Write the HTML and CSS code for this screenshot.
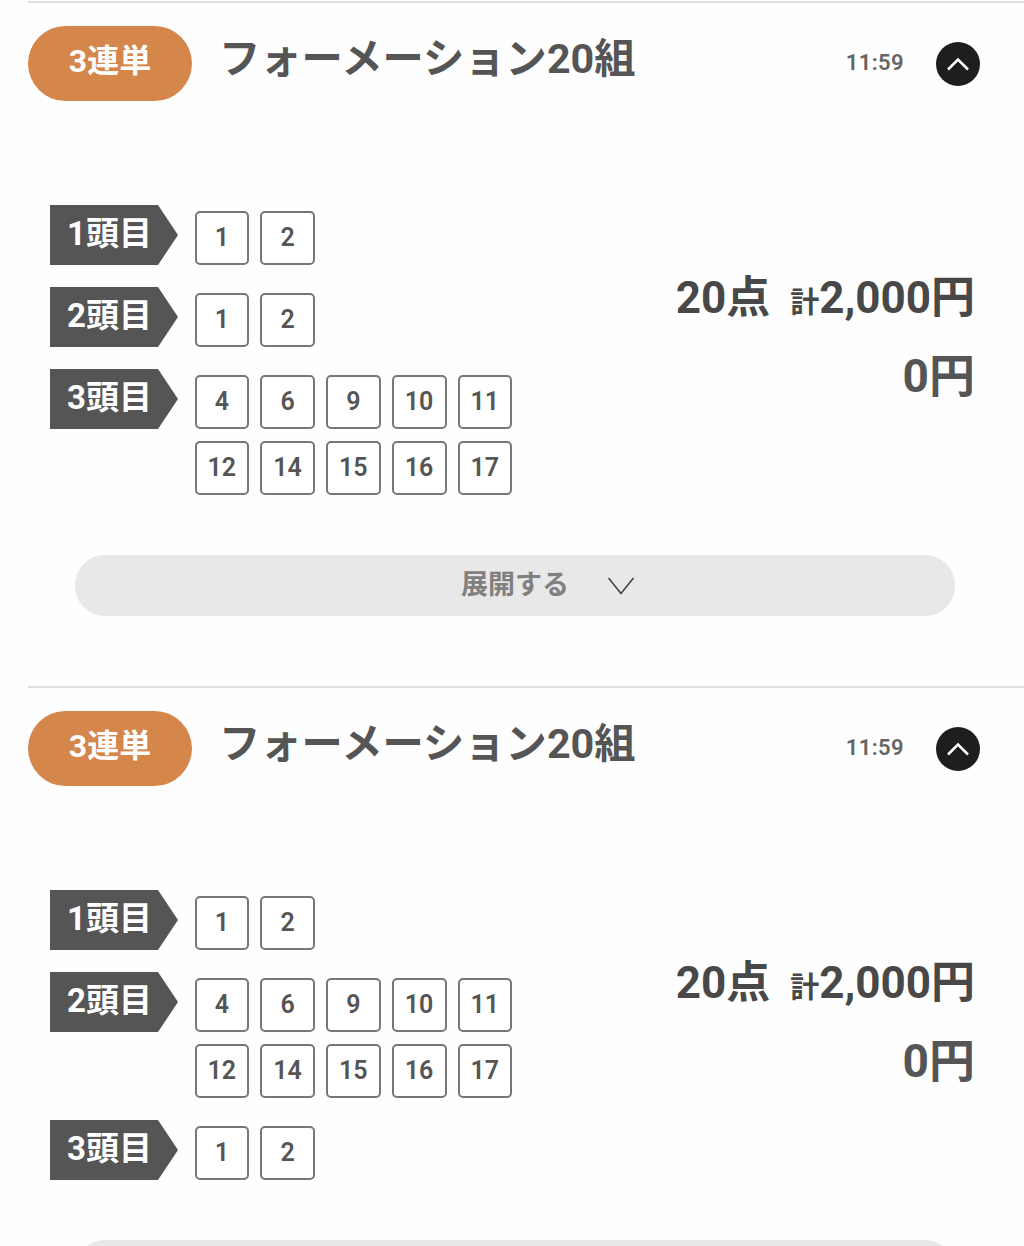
FILE: index.html
```html
<!DOCTYPE html>
<html lang="ja">
<head>
    <meta charset="UTF-8">
    <meta name="viewport" content="width=device-width, initial-scale=1.0">
    <title>購入履歴</title>
    <link rel="stylesheet" href="styles.css">
</head>
<body>
    <div class="bet-card">
        <div class="bet-header">
            <span class="bet-type">3連単</span>
            <h2 class="bet-title">フォーメーション20組</h2>
            <span class="bet-time">11:59</span>
            <span class="toggle-btn">
                <svg width="24" height="14" viewBox="0 0 24 14"><path d="M2 12.5 12 2.5 22 12.5"/></svg>
            </span>
        </div>

        <div class="bet-body">
            <div class="picks">
                <div class="pick-row">
                    <div class="pick-label">1頭目</div>
                    <div class="numbers">
                        <span class="num">1</span><span class="num">2</span>
                    </div>
                </div>
                <div class="pick-row">
                    <div class="pick-label">2頭目</div>
                    <div class="numbers">
                        <span class="num">1</span><span class="num">2</span>
                    </div>
                </div>
                <div class="pick-row">
                    <div class="pick-label">3頭目</div>
                    <div class="numbers">
                        <span class="num">4</span><span class="num">6</span><span class="num">9</span><span class="num">10</span><span class="num">11</span>
                        <span class="num">12</span><span class="num">14</span><span class="num">15</span><span class="num">16</span><span class="num">17</span>
                    </div>
                </div>
            </div>
            <div class="summary">
                <p class="summary-line"><span class="points">20点</span><small>計</small>2,000円</p>
                <p class="summary-line payout">0円</p>
            </div>
        </div>

        <div class="expand-btn">
            <span>展開する</span>
            <svg width="28" height="18" viewBox="0 0 28 18"><path d="M1.5 1 14 16.5 26.5 1"/></svg>
        </div>
    </div>

    <div class="bet-card">
        <div class="bet-header">
            <span class="bet-type">3連単</span>
            <h2 class="bet-title">フォーメーション20組</h2>
            <span class="bet-time">11:59</span>
            <span class="toggle-btn">
                <svg width="24" height="14" viewBox="0 0 24 14"><path d="M2 12.5 12 2.5 22 12.5"/></svg>
            </span>
        </div>

        <div class="bet-body">
            <div class="picks">
                <div class="pick-row">
                    <div class="pick-label">1頭目</div>
                    <div class="numbers">
                        <span class="num">1</span><span class="num">2</span>
                    </div>
                </div>
                <div class="pick-row">
                    <div class="pick-label">2頭目</div>
                    <div class="numbers">
                        <span class="num">4</span><span class="num">6</span><span class="num">9</span><span class="num">10</span><span class="num">11</span>
                        <span class="num">12</span><span class="num">14</span><span class="num">15</span><span class="num">16</span><span class="num">17</span>
                    </div>
                </div>
                <div class="pick-row">
                    <div class="pick-label">3頭目</div>
                    <div class="numbers">
                        <span class="num">1</span><span class="num">2</span>
                    </div>
                </div>
            </div>
            <div class="summary">
                <p class="summary-line"><span class="points">20点</span><small>計</small>2,000円</p>
                <p class="summary-line payout">0円</p>
            </div>
        </div>

        <div class="expand-btn">
            <span>展開する</span>
            <svg width="28" height="18" viewBox="0 0 28 18"><path d="M1.5 1 14 16.5 26.5 1"/></svg>
        </div>
    </div>
</body>
</html>
```

FILE: styles.css
```css
html {
    height: 1246px;
    overflow: hidden;
}

body {
    font-family: Roboto, "Noto Sans CJK JP", sans-serif;
    background-color: #fefefe;
    color: #555;
    margin: 0;
    padding: 1px 0 0;
}

.bet-card {
    margin-left: 28px;
    border-top: 2px solid #dedede;
    height: 683px;
}

/* header */
.bet-header {
    display: flex;
    align-items: flex-start;
    padding: 23px 44px 0 0;
}

.bet-type {
    width: 164px;
    height: 75px;
    border-radius: 38px;
    background-color: #d5864b;
    color: #fff;
    font-size: 32px;
    font-weight: 700;
    line-height: 71px;
    text-align: center;
}

.bet-title {
    margin: 1px 0 0 27px;
    font-size: 41.3px;
    font-weight: 700;
    line-height: 64px;
    color: #555;
    white-space: nowrap;
}

.bet-time {
    margin-left: auto;
    margin-top: 21px;
    font-size: 22px;
    font-weight: 600;
    line-height: 32px;
    letter-spacing: 0.4px;
    color: #666;
}

.toggle-btn {
    display: flex;
    align-items: center;
    justify-content: center;
    width: 44px;
    height: 44px;
    margin: 16px 0 0 32px;
    border-radius: 50%;
    background-color: #1e1e1e;
}

.toggle-btn path {
    fill: none;
    stroke: #fff;
    stroke-width: 2.5;
}

/* picks */
.bet-body {
    display: flex;
    justify-content: space-between;
    margin-top: 104px;
    padding: 0 49px 0 22px;
}

.pick-row {
    display: flex;
    align-items: flex-start;
    margin-bottom: 22px;
}

.pick-row:last-child {
    margin-bottom: 0;
}

.pick-label {
    width: 128px;
    height: 60px;
    background-color: #555;
    clip-path: polygon(0 0, 108px 0, 100% 50%, 108px 100%, 0 100%);
    color: #fff;
    font-size: 33px;
    font-weight: 700;
    line-height: 57px;
    padding-left: 17px;
    box-sizing: border-box;
    flex-shrink: 0;
}

.numbers {
    display: flex;
    flex-wrap: wrap;
    gap: 12px 11px;
    width: 320px;
    margin: 6px 0 0 16.5px;
}

.num {
    width: 54.75px;
    height: 54px;
    box-sizing: border-box;
    border: 2px solid #777;
    border-radius: 5px;
    background-color: #fff;
    font-size: 25px;
    font-weight: 600;
    line-height: 50px;
    text-align: center;
    color: #555;
}

/* totals */
.summary {
    margin-top: 61px;
    text-align: right;
}

.summary-line {
    margin: 0;
    height: 78px;
    font-size: 44px;
    font-weight: 700;
    line-height: 64px;
    color: #484848;
    white-space: nowrap;
}

.summary-line small {
    font-size: 29px;
}

.points {
    margin-right: 20px;
}

.payout {
    font-size: 46px;
    color: #555;
}

/* expand */
.expand-btn {
    display: flex;
    align-items: center;
    justify-content: center;
    gap: 38px;
    width: 880px;
    height: 61px;
    box-sizing: border-box;
    margin: 60px 0 0 47px;
    padding-left: 66px;
    border-radius: 30px;
    background-color: #e8e8e8;
    color: #808080;
    font-size: 27px;
    font-weight: 700;
}

.expand-btn span {
    margin-top: -6px;
}

.expand-btn path {
    fill: none;
    stroke: #444;
    stroke-width: 1.6;
}
```
